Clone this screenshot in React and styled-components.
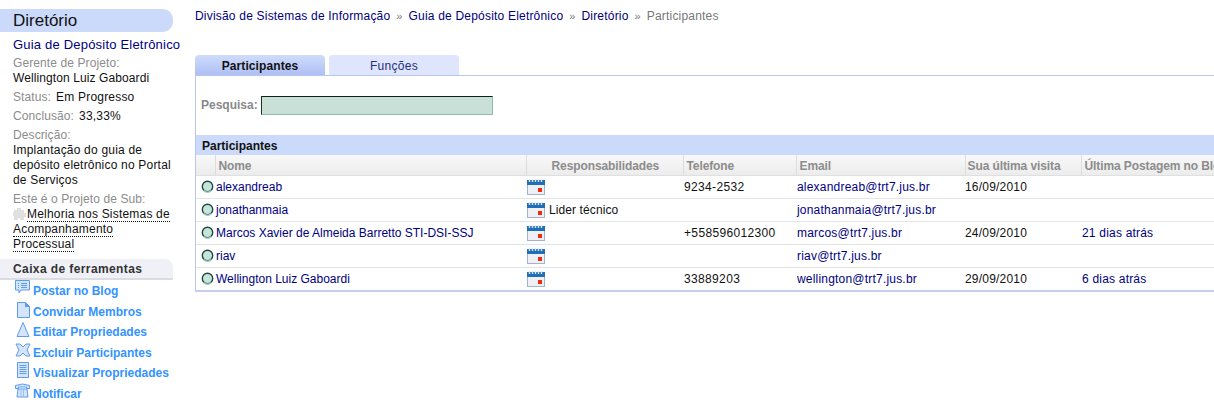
import React from "react";
import styled, { createGlobalStyle } from "styled-components";

const Global = createGlobalStyle`
  html, body { margin: 0; padding: 0; background: #fff; overflow: hidden; }
  body { font-family: "Liberation Sans", Arial, sans-serif; font-size: 12px; color: #000; }
`;
const Page = styled.div`
  display: flex; width: 1214px; height: 415px; overflow: hidden;
`;
const Side = styled.aside`
  width: 173px; flex: none; padding-top: 9px; margin-right: 22px;
`;
const SideTitle = styled.h1`
  margin: 0; height: 23px; line-height: 23px; padding-left: 13px;
  background: #cbd9fb; border-radius: 0 10px 10px 0;
  font-size: 17px; font-weight: 400; color: #111;
`;
const SideBody = styled.div`
  padding-left: 13px; width: 175px; white-space: nowrap;
`;
const ProjectLink = styled.div`
  color: #000080; font-size: 13px; line-height: 15px; margin-top: 5px; margin-bottom: 4px; letter-spacing: .2px;
`;
const Field = styled.div`
  margin-bottom: ${p => p.$mb ?? 4}px; line-height: 15px;
`;
const Label = styled.span`
  color: #8c8c8c; letter-spacing: .1px;
`;
const Value = styled.span`
  color: #111; letter-spacing: .2px; margin-left: ${p => p.$ml ?? 0}px;
`;
const Block = styled.div`
  color: #111; letter-spacing: .2px;
`;
const Owner = styled(Block)`
  letter-spacing: .1px;
`;
const SubLink = styled.span`
  color: #111; border-bottom: 1px dotted #111; letter-spacing: .2px;
`;
const ToolHead = styled.div`
  height: 19px; line-height: 21px; margin-top: 7px; padding-left: 13px;
  background: #f0f1f6; border-bottom: 2px solid #dcdde2; border-radius: 0 8px 0 0;
  font-weight: 700; color: #333; letter-spacing: .4px;
`;
const ToolList = styled.ul`
  list-style: none; margin: 0; padding: 0 0 0 15px;
`;
const ToolItem = styled.li`
  display: flex; align-items: flex-start; height: 20.6px; gap: 1px; white-space: nowrap;
  color: #3393ff; font-weight: 700; font-size: 12px; line-height: 15px;
`;
const ToolText = styled.span`
  margin-top: 4px;
`;
const Main = styled.main`
  flex: 1; min-width: 0;
`;
const Crumbs = styled.nav`
  height: 55px; padding-top: 9px; box-sizing: border-box; line-height: 15px; letter-spacing: .2px;
  display: flex; color: #000080; white-space: nowrap;
`;
const Sep = styled.span`
  color: #777; margin: 0 6px; letter-spacing: 0; font-size: 11px;
  &:first-of-type { margin-left: 7px; }
`;
const Current = styled.span`
  color: #777;
`;
const Tabs = styled.div`
  display: flex; gap: 4px; height: 20px;
`;
const Tab = styled.div`
  width: 130px; height: 20px; line-height: 22px; text-align: center; border-radius: 4px 4px 0 0;
  background: ${p => p.$active ? "linear-gradient(#cfdcfb,#aebff5)" : "#dfe5fc"};
  color: ${p => p.$active ? "#111" : "#223080"};
  font-weight: ${p => p.$active ? 700 : 400};
  letter-spacing: ${p => p.$active ? ".1px" : ".3px"};
`;
const Panel = styled.section`
  border-top: 1px solid #b9c6f2; border-left: 1px solid #b9c6f2; border-bottom: 2px solid #c4cff3;
  width: 1100px;
`;
const SearchRow = styled.div`
  display: flex; align-items: center; height: 59px; padding: 0 0 1px 5px; box-sizing: border-box;
`;
const SearchLabel = styled.label`
  color: #8a8a8a; font-weight: 700; margin-right: 3px;
`;
const SearchInput = styled.input`
  width: 232px; height: 19px; box-sizing: border-box; padding: 0; background: #c8e0d8;
  border: 1px solid #8cbcae; border-top: 1px solid #102018; border-left: 1px solid #203028;
`;
const Band = styled.div`
  height: 20px; line-height: 22px; background: #cbd9fb; padding-left: 6px;
  font-weight: 700; color: #111;
`;
const Table = styled.table`
  border-collapse: collapse; table-layout: fixed; width: 1018px;
`;
const Th = styled.th`
  height: 20px; padding: 2px 0 0 ${p => p.$pl ?? 3}px; text-align: left; font-size: 12px; font-weight: 700; color: #8c8c8c;
  background: linear-gradient(#f8f8f8,#ececec); border-right: 1px solid #dcdcdc; border-bottom: 1px solid #e0e0e0;
  box-sizing: border-box; white-space: nowrap; overflow: visible; letter-spacing: -.1px;
  &:last-child { border-right: 0; }
`;
const Td = styled.td`
  height: 23px; box-sizing: border-box; padding: ${p => p.$pt ?? 2}px 0 0 ${p => p.$pl ?? 1}px; border-bottom: 1px solid #e4e4e4;
  white-space: nowrap; line-height: 15px; letter-spacing: ${p => p.$ls ?? ".2px"};
  color: ${p => p.$link ? "#000080" : "#111"};
  tr:last-child & { border-bottom: 0; }
`;
const RespCell = styled.div`
  display: flex; align-items: center; gap: 3px; letter-spacing: .1px;
`;
const RespText = styled.span`
  margin-top: 2px;
`;

const Dot = () => (
  <svg width="13" height="13" viewBox="0 0 13 13" style={{ display: "block", marginLeft: 5 }}>
    <circle cx="6.5" cy="6.5" r="5.2" fill="#c8e4da" stroke="#1c4a42" strokeWidth="1.4" />
    <path d="M2.5 10.5a5.5 5.5 0 0 0 8 0" fill="none" stroke="#a8d4c6" strokeWidth="1.4" />
  </svg>
);
const Cal = () => (
  <svg width="19" height="16" viewBox="0 0 19 16" style={{ display: "block", flex: "none" }}>
    <rect x=".5" y="2.5" width="17" height="13" fill="#eef0f6" stroke="#a3b3c8" />
    <rect x="0" y="1" width="18" height="5" fill="#1f6fb8" />
    <path d="M2 0v3M5 0v3M8 0v3M11 0v3M14 0v3" stroke="#d8e4f0" strokeWidth="1.4" transform="translate(.5 0)" />
    <rect x="11" y="9" width="4" height="4" fill="#ee2a10" />
  </svg>
);
const I = ({ children, w = 17, h = 18 }) => (
  <svg width={w} height={h} viewBox="0 0 17 18" fill="#d4e4fb" stroke="#5f9cf0" strokeWidth="1" style={{ flex: "none", display: "block" }}>
    {children}
  </svg>
);
const tools = [
  ["Postar no Blog", <I><path d="M.5.5h14v9.5H6l-2 3v-3H.5z" /><path d="M3 3.5h1M6 3.5h6M3 5.5h1M6 5.5h6M3 7.5h1M6 7.5h6" /></I>],
  ["Convidar Membros", <I><path d="M2.5 1.5h8l4 4v11h-12z" /><path d="M10.5 1.5l4 4h-4z" fill="#5f9cf0" /></I>],
  ["Editar Propriedades", <I><path d="M8 1.5l6 14H2z" /></I>],
  ["Excluir Participantes", <I><path d="M1 2h4l3 3 3-3h4l-3 6 3 6h-4l-3-3-3 3H1l3-6z" /></I>],
  ["Visualizar Propriedades", <I><path d="M2.5 .5h11v15h-11z" /><path d="M4.5 3.5h7M4.5 5.5h7M4.5 7.5h7M4.5 9.5h7M4.5 11.5h7" /></I>],
  ["Notificar", <I><path d="M.5 2.5q7-3 14 0v3h-3V4h-8v1.5h-3z" /><path d="M3 6h9l1 8H2z" /><path d="M5.5 8h1M8 8h1M5.5 10h1M8 10h1M5.5 12h1M8 12h1" /></I>],
];
const rows = [
  ["alexandreab", "", "9234-2532", "alexandreab@trt7.jus.br", "16/09/2010", ""],
  ["jonathanmaia", "Lider técnico", "", "jonathanmaia@trt7.jus.br", "", ""],
  ["Marcos Xavier de Almeida Barretto STI-DSI-SSJ", "", "+558596012300", "marcos@trt7.jus.br", "24/09/2010", "21 dias atrás"],
  ["riav", "", "", "riav@trt7.jus.br", "", ""],
  ["Wellington Luiz Gaboardi", "", "33889203", "wellington@trt7.jus.br", "29/09/2010", "6 dias atrás"],
];

export default function App() {
  return (
    <Page>
      <Global />
      <Side>
        <SideTitle>Diretório</SideTitle>
        <SideBody>
          <ProjectLink>Guia de Depósito Eletrônico</ProjectLink>
          <Field>
            <Label>Gerente de Projeto:</Label>
            <Owner>Wellington Luiz Gaboardi</Owner>
          </Field>
          <Field><Label>Status:</Label><Value $ml={5}>Em Progresso</Value></Field>
          <Field><Label>Conclusão:</Label><Value $ml={5}>33,33%</Value></Field>
          <Field>
            <Label>Descrição:</Label>
            <Block>Implantação do guia de<br />depósito eletrônico no Portal<br />de Serviços</Block>
          </Field>
          <Field $mb={0}>
            <Label>Este é o Projeto de Sub:</Label>
            <Block>
              <svg width="14" height="13" viewBox="0 0 14 13" style={{ verticalAlign: "-2px" }}>
                <path d="M1 3h3V1h4v2h3v3h2v4h-2v3H7v-2H5v2H1V9H0V5h1z" fill="#e0e0e0" />
              </svg>
              <SubLink>Melhoria nos Sistemas de</SubLink><br />
              <SubLink>Acompanhamento</SubLink><br />
              <SubLink>Processual</SubLink>
            </Block>
          </Field>
        </SideBody>
        <ToolHead>Caixa de ferramentas</ToolHead>
        <ToolList>
          {tools.map(([t, ic]) => (
            <ToolItem key={t}>{ic}<ToolText>{t}</ToolText></ToolItem>
          ))}
        </ToolList>
      </Side>
      <Main>
        <Crumbs>
          <span>Divisão de Sistemas de Informação</span><Sep>»</Sep>
          <span>Guia de Depósito Eletrônico</span><Sep>»</Sep>
          <span>Diretório</span><Sep>»</Sep>
          <Current>Participantes</Current>
        </Crumbs>
        <Tabs>
          <Tab $active>Participantes</Tab>
          <Tab>Funções</Tab>
        </Tabs>
        <Panel>
          <SearchRow>
            <SearchLabel>Pesquisa:</SearchLabel>
            <SearchInput />
          </SearchRow>
          <Band>Participantes</Band>
          <Table>
            <colgroup>
              <col style={{ width: 19 }} /><col style={{ width: 311 }} /><col style={{ width: 157 }} />
              <col style={{ width: 113 }} /><col style={{ width: 169 }} /><col style={{ width: 116 }} /><col style={{ width: 133 }} />
            </colgroup>
            <thead>
              <tr>
                <Th /><Th>Nome</Th><Th $pl={25}>Responsabilidades</Th><Th>Telefone</Th><Th>Email</Th><Th $pl={2}>Sua última visita</Th><Th>Última Postagem no Blog</Th>
              </tr>
            </thead>
            <tbody>
              {rows.map(r => (
                <tr key={r[0]}>
                  <Td $pl={0} $pt={0}><Dot /></Td>
                  <Td $link $ls="0">{r[0]}</Td>
                  <Td $pl={1} $pt={0}><RespCell><Cal />{r[1] && <RespText>{r[1]}</RespText>}</RespCell></Td>
                  <Td $pl={1} $ls=".35px">{r[2]}</Td>
                  <Td $link>{r[3]}</Td>
                  <Td $pl={0}>{r[4]}</Td>
                  <Td $link>{r[5]}</Td>
                </tr>
              ))}
            </tbody>
          </Table>
        </Panel>
      </Main>
    </Page>
  );
}
